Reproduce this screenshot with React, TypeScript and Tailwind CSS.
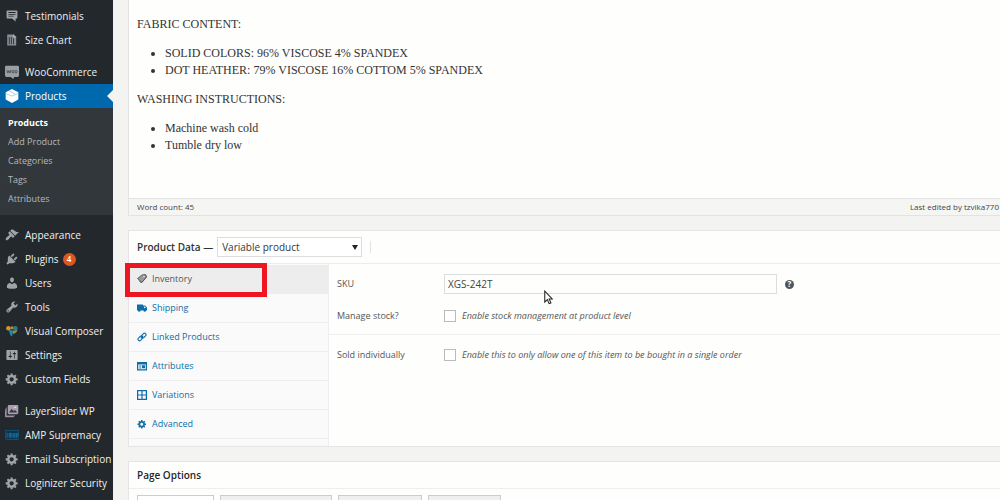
import React, { useState } from 'react'
import clsx from 'clsx'

type IconProps = { className?: string }

type MenuItem = {
  label: string
  icon: React.ReactNode
  active?: boolean
  badge?: number
}

type ProductTab = {
  id: string
  label: string
  icon: React.ReactNode
}

const paths = {
  appearance:
    'M14.48 11.06L7.41 3.99l1.5-1.5c.5-.56 2.3-.47 3.51.32 1.21.8 1.43 1.28 2.91 2.1 1.18.64 2.45 1.26 4.45.85zm-.71.71L6.7 4.7 4.93 6.47c-.39.39-.39 1.02 0 1.41l1.06 1.06c.39.39.39 1.03 0 1.42-.6.6-1.43 1.11-2.21 1.69-.35.26-.7.53-1.01.84C1.43 14.23.4 16.08 1.4 17.07c.99 1 2.84-.03 4.18-1.36.31-.31.58-.66.85-1.02.57-.78 1.08-1.61 1.69-2.21.39-.39 1.02-.39 1.41 0l1.06 1.06c.39.39 1.02.39 1.41 0z',
  plugins:
    'M13.11 4.36L9.87 7.6 8 5.73l3.24-3.24c.35-.34 1.05-.2 1.56.32.52.51.66 1.21.31 1.55zm-8 1.77l.91-1.12 9.01 9.01-1.19.84c-.71.71-2.63 1.16-3.82 1.16H6.14L4.9 17.26c-.59.59-1.54.59-2.12 0-.59-.58-.59-1.53 0-2.12l1.24-1.24v-3.88c0-1.13.4-3.19 1.09-3.89zm7.26 3.97l3.24-3.24c.34-.35 1.04-.21 1.55.31.52.51.66 1.21.31 1.55l-3.24 3.25z',
  users:
    'M10 9.25c-2.27 0-2.73-3.44-2.73-3.44C7 4.02 7.82 2 9.97 2c2.16 0 2.98 2.02 2.71 3.81 0 0-.41 3.44-2.68 3.44zm0 2.57L12.72 10c2.39 0 4.52 2.33 4.52 4.53v2.49s-3.65 1.13-7.24 1.13c-3.65 0-7.24-1.13-7.24-1.13v-2.49c0-2.25 1.94-4.48 4.47-4.48z',
  tools:
    'M16.68 9.77c-1.34 1.34-3.3 1.67-4.95.99l-5.41 6.52c-.99.99-2.59.99-3.58 0s-.99-2.59 0-3.57l6.52-5.42c-.68-1.65-.35-3.61.99-4.95 1.28-1.28 3.12-1.62 4.72-1.06l-2.89 2.89 2.82 2.82 2.86-2.87c.53 1.58.18 3.39-1.08 4.65zM3.81 16.21c.4.39 1.04.39 1.43 0 .4-.4.4-1.04 0-1.43-.39-.4-1.03-.4-1.43 0-.39.39-.39 1.03 0 1.43z',
  settings:
    'M18 16V4c0-.55-.45-1-1-1H3c-.55 0-1 .45-1 1v12c0 .55.45 1 1 1h14c.55 0 1-.45 1-1zM8 11h1c.55 0 1 .45 1 1s-.45 1-1 1H8v1.5c0 .28-.22.5-.5.5s-.5-.22-.5-.5V13H6c-.55 0-1-.45-1-1s.45-1 1-1h1V5.5c0-.28.22-.5.5-.5s.5.22.5.5V11zm5-2h-1c-.55 0-1-.45-1-1s.45-1 1-1h1V5.5c0-.28.22-.5.5-.5s.5.22.5.5V7h1c.55 0 1 .45 1 1s-.45 1-1 1h-1v5.5c0 .28-.22.5-.5.5s-.5-.22-.5-.5V9z',
  gear:
    'M18 12h-2.18c-.17.7-.44 1.35-.81 1.93l1.54 1.54-2.1 2.1-1.54-1.54c-.58.36-1.23.63-1.91.79V19H8v-2.18c-.68-.16-1.33-.43-1.91-.79l-1.54 1.54-2.12-2.12 1.54-1.54c-.36-.58-.63-1.23-.79-1.91H1V9.03h2.17c.16-.7.44-1.35.8-1.94L2.43 5.55l2.1-2.1 1.54 1.54c.58-.37 1.24-.64 1.93-.81V2h3v2.18c.68.16 1.33.43 1.91.79l1.54-1.54 2.12 2.12-1.54 1.54c.36.59.64 1.24.8 1.94H18V12zm-8.5 1.5c1.66 0 3-1.34 3-3s-1.34-3-3-3-3 1.34-3 3 1.34 3 3 3z',
  testimonial:
    'M2 1h16c.55 0 1 .45 1 1v11c0 .55-.45 1-1 1h-2v5l-6-5H2c-.55 0-1-.45-1-1V2c0-.55.45-1 1-1zm2 2.500v1.300h12V3.500zm0 3v1.300h12V6.500zm0 3v1.300h9V9.500z',
  truck:
    'M0 3h12v2h4l4 4v6h-2a2.500 2.500 0 0 1-5 0H7a2.500 2.500 0 0 1-5 0H0zM14 7v3h4l-3-3z',
  window: 'M0 2h20v17H0zM2.500 7v9.500h15V7zM4.500 9h4v2h-4zM4.500 13h4v2h-4zM10 8.500h6v6h-6z',
  grid: 'M0 0h20v20H0zm2.500 2.500v6.300h6.300V2.500zm8.700 0v6.300h6.300V2.500zm-8.700 8.700v6.300h6.300v-6.300zm8.700 0v6.300h6.300v-6.300z',
}

function Glyph({ d, className }: IconProps & { d: string }) {
  return (
    <svg viewBox="0 0 20 20" fill="currentColor" fillRule="evenodd" className={clsx('shrink-0', className)} aria-hidden="true">
      <path d={d} />
    </svg>
  )
}

function DocIcon({ className }: IconProps) {
  return (
    <svg viewBox="0 0 20 20" className={className} aria-hidden="true">
      <path d="M2 1h11l4 4v14H2z" fill="#878d92" />
      <path d="M5.500 5v12M9 5v12M12.500 7v10" stroke="#2c3237" strokeWidth="1.500" />
      <path d="M13 1v4h4" fill="none" stroke="#cdd0d2" strokeWidth="1.200" />
    </svg>
  )
}

function WooIcon({ className }: IconProps) {
  return (
    <svg viewBox="0 0 20 20" className={className} aria-hidden="true">
      <path d="M2 1h16a2 2 0 0 1 2 2v12a2 2 0 0 1-2 2h-5l-1 3-4-3H2a2 2 0 0 1-2-2V3a2 2 0 0 1 2-2z" fill="#9a9fa3" />
      <path d="M2.500 7l1.500 4.500L5.500 8 7 11.500 8.500 7" fill="none" stroke="#454b50" strokeWidth="1.200" />
      <circle cx="11.500" cy="9.500" r="1.700" fill="none" stroke="#454b50" strokeWidth="1.200" />
      <circle cx="15.800" cy="9.500" r="1.700" fill="none" stroke="#454b50" strokeWidth="1.200" />
    </svg>
  )
}

function BoxIcon({ className }: IconProps) {
  return (
    <svg viewBox="0 0 20 20" className={className} aria-hidden="true">
      <path d="M10 0l9 4.500v10.500L10 20l-9-5V4.500z" fill="#fff" />
      <path d="M1.500 6.500l8 3.500 9-3.500M5.500 2.500l9 4.500" fill="none" stroke="#8fbfe0" strokeWidth="1" />
    </svg>
  )
}

function ComposerIcon({ className }: IconProps) {
  return (
    <svg viewBox="0 0 20 20" className={className} aria-hidden="true">
      <circle cx="4" cy="5.500" r="3.800" fill="#d6922b" />
      <circle cx="10" cy="4.500" r="2.500" fill="#b9913a" />
      <path d="M4 8.500l8 .5-2 10c-4-1-3-6-6-10.500z" fill="#2c85ad" />
      <circle cx="15.500" cy="5.500" r="3.800" fill="#2f7890" />
      <path d="M11 9.500l8-1c-1 5-4 5-7 7z" fill="#69a23f" />
    </svg>
  )
}

function LayersIcon({ className }: IconProps) {
  return (
    <svg viewBox="0 0 20 20" className={className} aria-hidden="true">
      <path d="M0 7l3-3v12h12l-3 3H0z" fill="#6f6678" />
      <rect x="4" y="1.500" width="15" height="13" rx="1.500" fill="#a79fb0" />
      <path d="M5.500 12l4-5 3 3 2-1.500 3 3.500z" fill="#3a3540" />
      <path d="M12 3l1 1.500 3-1 0 2-3 0z" fill="#eee" />
      <path d="M1 9v9h12" fill="none" stroke="#b5aebc" strokeWidth="1" />
    </svg>
  )
}

function AmpIcon({ className }: IconProps) {
  return (
    <svg viewBox="0 0 20 14" className={className} aria-hidden="true">
      <rect x=".5" y=".5" width="19" height="13" rx="1" fill="#0c3450" stroke="#17608f" />
      <path d="M3 11V4M6 11V5h4v6M8 5v6M12.500 11V5h1.500v6M16 12V5h2v4h-2" fill="none" stroke="#1d78b0" strokeWidth="1.200" />
    </svg>
  )
}

function TagIcon({ className }: IconProps) {
  return (
    <svg viewBox="0 0 20 20" className={className} aria-hidden="true">
      <path d="M1 9l9-7 7-1 1 6-8 10z" fill="#999" stroke="#555" strokeWidth="1.800" />
      <path d="M4 13l4 5 11-11V3" fill="none" stroke="#555" strokeWidth="1.500" />
      <circle cx="14" cy="5" r="1.500" fill="#eee" />
    </svg>
  )
}

function LinkIcon({ className }: IconProps) {
  return (
    <svg viewBox="0 0 20 20" fill="none" stroke="currentColor" strokeWidth="2.200" className={className} aria-hidden="true">
      <rect x="8.500" y="4" width="10" height="6" rx="3" transform="rotate(-45 13.500 7)" />
      <rect x="1.500" y="10" width="10" height="6" rx="3" transform="rotate(-45 6.500 13)" />
      <path d="M7.500 12.500l5-5" />
    </svg>
  )
}

const menuGroups: MenuItem[][] = [
  [
    { label: 'Testimonials', icon: <Glyph d={paths.testimonial} className="size-3" /> },
    { label: 'Size Chart', icon: <DocIcon className="size-3" /> },
  ],
  [
    { label: 'WooCommerce', icon: <WooIcon className="size-3.5" /> },
    { label: 'Products', icon: <BoxIcon className="size-3.5" />, active: true },
  ],
  [
    { label: 'Appearance', icon: <Glyph d={paths.appearance} className="size-3.5" /> },
    { label: 'Plugins', icon: <Glyph d={paths.plugins} className="size-3.5" />, badge: 4 },
    { label: 'Users', icon: <Glyph d={paths.users} className="size-3.5" /> },
    { label: 'Tools', icon: <Glyph d={paths.tools} className="size-3.5" /> },
    { label: 'Visual Composer', icon: <ComposerIcon className="size-3" /> },
    { label: 'Settings', icon: <Glyph d={paths.settings} className="size-3.5" /> },
    { label: 'Custom Fields', icon: <Glyph d={paths.gear} className="size-3.5" /> },
  ],
  [
    { label: 'LayerSlider WP', icon: <LayersIcon className="size-3.5" /> },
    { label: 'AMP Supremacy', icon: <AmpIcon className="w-3.5" /> },
    { label: 'Email Subscription', icon: <Glyph d={paths.gear} className="size-3.5" /> },
    { label: 'Loginizer Security', icon: <Glyph d={paths.gear} className="size-3.5" /> },
  ],
]

const submenu = ['Products', 'Add Product', 'Categories', 'Tags', 'Attributes']

const productTabs: ProductTab[] = [
  { id: 'inventory', label: 'Inventory', icon: <TagIcon className="size-2.5" /> },
  { id: 'shipping', label: 'Shipping', icon: <Glyph d={paths.truck} className="size-2.5" /> },
  { id: 'linked', label: 'Linked Products', icon: <LinkIcon className="size-2.5" /> },
  { id: 'attributes', label: 'Attributes', icon: <Glyph d={paths.window} className="size-2.5" /> },
  { id: 'variations', label: 'Variations', icon: <Glyph d={paths.grid} className="size-2.5" /> },
  { id: 'advanced', label: 'Advanced', icon: <Glyph d={paths.gear} className="size-2.5" /> },
]

function SidebarLink({ item }: { item: MenuItem }) {
  return (
    <li>
      <a
        href="#"
        className={clsx(
          'relative flex h-6 items-center gap-1.5 pl-[5px] whitespace-nowrap',
          item.active ? 'bg-[#0069ad] text-white' : 'text-[#eff0f1]'
        )}
      >
        <span className="flex w-3.5 shrink-0 justify-center text-[#9fa4a8]">{item.icon}</span>
        {item.label}
        {item.badge ? (
          <span className="-ml-0.5 flex size-[13px] items-center justify-center rounded-full bg-[#dc5720] text-[8px] font-semibold text-white">
            {item.badge}
          </span>
        ) : null}
        {item.active ? (
          <svg viewBox="0 0 6 12" className="absolute right-0 h-3 w-1.5" aria-hidden="true">
            <path d="M6 0v12L0 6z" fill="#f3f3f2" />
          </svg>
        ) : null}
      </a>
    </li>
  )
}

function Sidebar() {
  return (
    <nav className="w-[113px] shrink-0 bg-[#22282c] pt-1 text-[10px] leading-4">
      {menuGroups.map((group, index) => (
        <ul key={index} className="mb-2">
          {group.map((item) => (
            <SidebarLink key={item.label} item={item} />
          ))}
          {index === 1 ? (
            <li className="bg-[#31373b] pt-[5px] pb-[7px] text-[9px]">
              <ul>
                {submenu.map((label, i) => (
                  <li key={label}>
                    <a
                      href="#"
                      className={clsx('flex h-[19px] items-center pl-2', i === 0 ? 'font-bold text-white' : 'text-[#b4b9be]')}
                    >
                      {label}
                    </a>
                  </li>
                ))}
              </ul>
            </li>
          ) : null}
        </ul>
      ))}
    </nav>
  )
}

function Editor() {
  return (
    <section className="border-b border-l border-[#e3e3e3] bg-[#fefefc]">
      <div className="min-h-[198px] px-2 pt-4 font-['Liberation_Serif',serif] text-[12px] leading-[17px] text-[#333]">
        <p className="mb-3">FABRIC CONTENT:</p>
        <ul className="mb-3 list-disc pl-7">
          <li>SOLID COLORS: 96% VISCOSE 4% SPANDEX</li>
          <li>DOT HEATHER: 79% VISCOSE 16% COTTOM 5% SPANDEX</li>
        </ul>
        <p className="mb-3">WASHING INSTRUCTIONS:</p>
        <ul className="list-disc pl-7">
          <li>Machine wash cold</li>
          <li>Tumble dry low</li>
        </ul>
      </div>
      <div className="flex h-[17px] items-center justify-between border-t border-[#e3e3e3] bg-[#f5f5f4] pr-px pl-2 text-[8px] text-[#444]">
        <span>Word count: 45</span>
        <span>Last edited by tzvika770</span>
      </div>
    </section>
  )
}

function ProductData() {
  const [type, setType] = useState('variable')
  const [tab, setTab] = useState('inventory')
  const [sku, setSku] = useState('XGS-242T')
  const [manageStock, setManageStock] = useState(false)
  const [soldIndividually, setSoldIndividually] = useState(false)

  return (
    <section className="relative mt-3.5 border border-r-0 border-[#e5e5e5] bg-[#fefefc]">
      <div className="flex h-[33px] items-center border-b border-[#ededed] pl-2">
        <label htmlFor="product-type" className="text-[10px] font-semibold text-[#2f3337]">
          Product Data —
        </label>
        <div className="relative ml-1 flex items-center">
          <select
            id="product-type"
            value={type}
            onChange={(e) => setType(e.target.value)}
            className="h-5 w-[145px] appearance-none border border-[#ddd] bg-white pl-1 text-[10px] font-medium text-[#32373c]"
          >
            <option value="simple">Simple product</option>
            <option value="variable">Variable product</option>
          </select>
          <svg viewBox="0 0 6 5" className="pointer-events-none absolute right-1 w-1.5" aria-hidden="true">
            <path d="M0 0h6L3 5z" fill="#222" />
          </svg>
        </div>
        <span className="ml-2 h-3 border-l border-[#e3e3e3]" />
      </div>

      <div className="flex">
        <div role="tablist" className="w-[200px] shrink-0 border-r border-[#eee] bg-[#fafafa] pt-px pb-[7px]">
          {productTabs.map((item) => (
            <button
              key={item.id}
              type="button"
              role="tab"
              aria-selected={tab === item.id}
              onClick={() => setTab(item.id)}
              className={clsx(
                'flex h-[29px] w-full items-center gap-1 border-b border-[#eee] pl-2 text-[9px]',
                tab === item.id ? 'bg-[#ededed] text-[#555]' : 'text-[#0f6ea8]'
              )}
            >
              {item.icon}
              <span className="pl-px">{item.label}</span>
            </button>
          ))}
        </div>

        <div className="min-w-0 flex-1 text-[9px] text-[#555]">
          <div className="border-b border-[#eee] pt-1 pb-0.5">
            <div className="flex h-8 items-center pl-2">
              <label htmlFor="sku" className="w-[107px] shrink-0">SKU</label>
              <input
                id="sku"
                value={sku}
                onChange={(e) => setSku(e.target.value)}
                className="h-5 w-[333px] border border-[#ddd] bg-[#fefefc] px-[3px] text-[10px] text-[#444]"
              />
              <span className="ml-2 flex size-[9px] items-center justify-center rounded-full bg-[#555] text-[8px] font-bold text-white">?</span>
            </div>
            <div className="flex h-8 items-center pl-2">
              <label htmlFor="manage-stock" className="w-[107px] shrink-0">Manage stock?</label>
              <input
                id="manage-stock"
                type="checkbox"
                checked={manageStock}
                onChange={(e) => setManageStock(e.target.checked)}
                className="size-3 appearance-none border border-[#bbb] bg-white checked:bg-[#0073aa]"
              />
              <span className="ml-1.5 italic">Enable stock management at product level</span>
            </div>
          </div>
          <div className="flex h-10 items-center pl-2">
            <label htmlFor="sold-individually" className="w-[107px] shrink-0">Sold individually</label>
            <input
              id="sold-individually"
              type="checkbox"
              checked={soldIndividually}
              onChange={(e) => setSoldIndividually(e.target.checked)}
              className="size-3 appearance-none border border-[#bbb] bg-white checked:bg-[#0073aa]"
            />
            <span className="ml-1.5 italic">Enable this to only allow one of this item to be bought in a single order</span>
          </div>
        </div>
      </div>

      {/* highlight frame over the inventory tab */}
      <div className="pointer-events-none absolute top-8 -left-1 h-[34px] w-[142px] border-5 border-[#ee1620]" />
      <svg viewBox="0 0 12 19" className="pointer-events-none absolute top-[59px] left-[415px] h-[15px] w-[9px]" aria-hidden="true">
        <path d="M1 1v14.500l3.500-3.200 2.300 5.400 2.400-1-2.300-5.200H11z" fill="#fff" stroke="#222" strokeWidth="1.400" />
      </svg>
    </section>
  )
}

function PageOptions() {
  return (
    <section className="mt-3.5 border border-r-0 border-b-0 border-[#e5e5e5] bg-[#fefefc]">
      <h2 className="flex h-[27px] items-center border-b border-[#eee] pl-2 text-[10px] font-semibold text-[#23282d]">Page Options</h2>
      <div className="flex gap-1.5 pt-1.5 pl-2">
        <button type="button" aria-label="General" className="h-6 w-[77px] border border-[#ccc] bg-[#fefefc]" />
        <button type="button" aria-label="Header" className="h-6 w-[112px] border border-[#ccc] bg-[#efefef]" />
        <button type="button" aria-label="Sidebar" className="h-6 w-[84px] border border-[#ccc] bg-[#efefef]" />
        <button type="button" aria-label="Footer" className="h-6 w-[73px] border border-[#ccc] bg-[#efefef]" />
      </div>
    </section>
  )
}

export default function App() {
  return (
    <div className="flex h-screen overflow-hidden bg-[#f3f3f2] font-['Open_Sans',sans-serif]">
      <Sidebar />
      <main className="min-w-0 flex-1 pl-[15px]">
        <Editor />
        <ProductData />
        <PageOptions />
      </main>
    </div>
  )
}
